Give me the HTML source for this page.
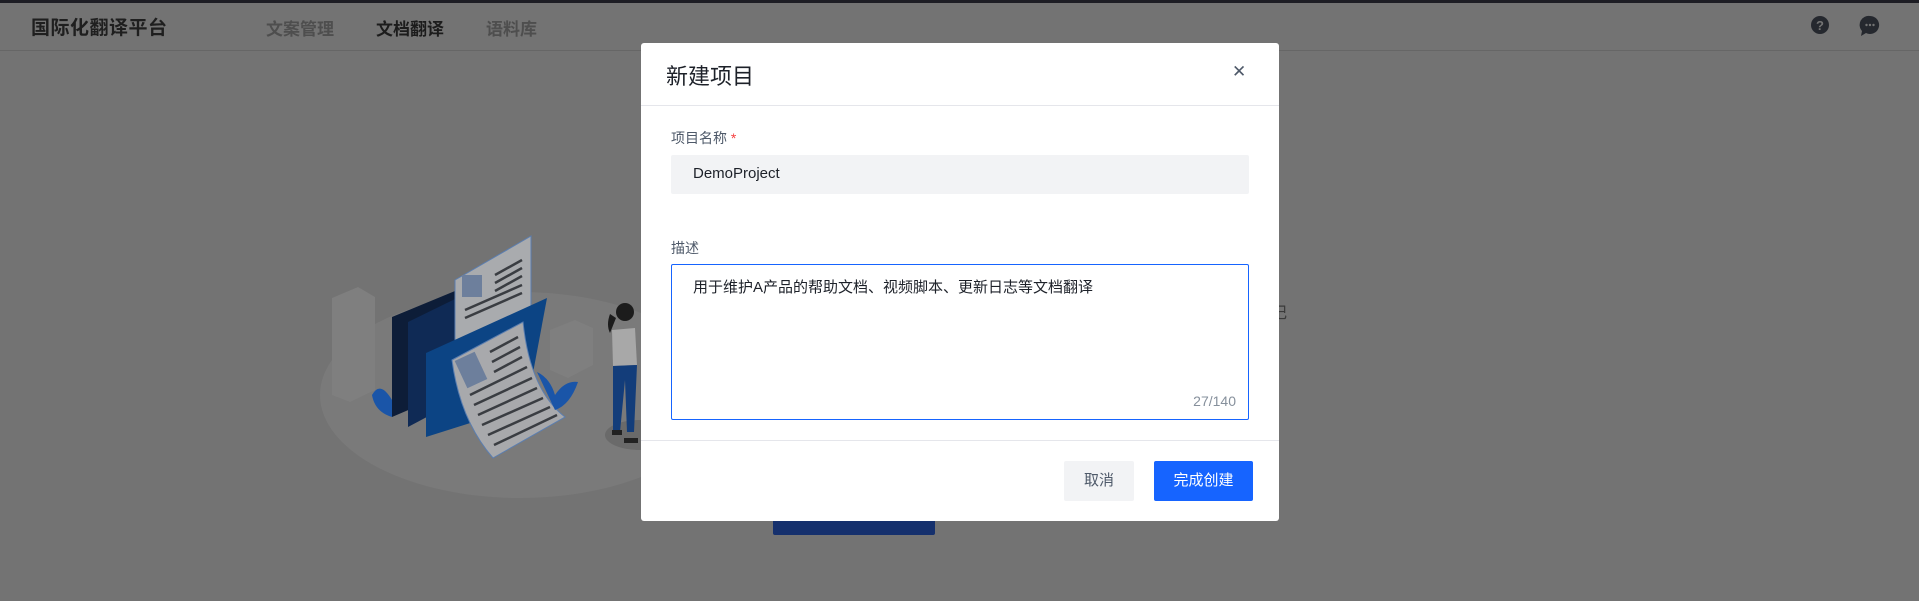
<!DOCTYPE html>
<html><head><meta charset="utf-8"><style>
*{margin:0;padding:0;box-sizing:border-box}
body{width:1919px;height:601px;overflow:hidden;background:#737373;font-family:"Liberation Sans","Noto Sans CJK SC",sans-serif;position:relative}
.abs{position:absolute}
.topbar{left:0;top:0;width:1919px;height:3px;background:#1d1d24}
.hdr{left:0;top:3px;width:1919px;height:48px;border-bottom:1px solid #666}
.logo{left:31px;top:13px;font-size:19px;font-weight:bold;color:#1f1f1f;letter-spacing:0.5px}
.nav{top:15px;font-size:17px;font-weight:bold;color:#4e4e4e}
.modal{left:641px;top:43px;width:638px;height:478px;background:#fff;border-radius:3px}
.mt{left:25px;top:16px;font-size:22px;color:#1d2129}
.close{left:591px;top:19px;font-size:17px;color:#4e5969}
.div{left:0;width:638px;height:1px;background:#e5e6eb}
.lbl{font-size:14px;color:#4e5969}
.inp{left:30px;top:112px;width:578px;height:39px;background:#f2f3f5;border-radius:2px;font-size:15px;color:#1d2129;padding:10px 22px}
.ta{left:30px;top:221px;width:578px;height:156px;border:1px solid #1664ff;border-radius:2px;font-size:15px;color:#1d2129;padding:11px 21px}
.cnt{right:12px;bottom:10px;font-size:14px;color:#86909c}
.btn{top:418px;height:40px;border-radius:2px;font-size:15px;text-align:center;line-height:40px}
</style></head><body>
<div class="abs topbar"></div>
<div class="abs hdr"></div>
<div class="abs logo">国际化翻译平台</div>
<div class="abs nav" style="left:266px">文案管理</div>
<div class="abs nav" style="left:376px;color:#1c1c1c">文档翻译</div>
<div class="abs nav" style="left:486px">语料库</div>
<svg class="abs" style="left:1811px;top:15px" width="70" height="22" viewBox="0 0 70 22">
<circle cx="9" cy="10" r="9" fill="#25282e"/><text x="9" y="15" font-size="13" font-weight="bold" fill="#737373" text-anchor="middle" font-family="Liberation Sans">?</text>
<path d="M59 1a9 9 0 1 1-4 17l-5 3 1-5a9 9 0 0 1 8-15z" fill="#25282e"/><circle cx="55.5" cy="10" r="1.2" fill="#737373"/><circle cx="59" cy="10" r="1.2" fill="#737373"/><circle cx="62.5" cy="10" r="1.2" fill="#737373"/>
</svg>
<svg class="abs" style="left:0;top:0" width="1919" height="601">
<ellipse cx="520" cy="395" rx="200" ry="103" fill="#7a7a7a"/>
<ellipse cx="640" cy="435" rx="35" ry="15" fill="#6a6a6a"/>
<polygon points="332,298 358,287 375,297 375,390 350,402 332,395" fill="#7f7f7f"/>
<polygon points="550,330 575,320 593,328 593,365 568,378 550,370" fill="#7f7f7f"/>
<polygon points="392,317 455,291 455,390 392,417" fill="#0d1d38"/>
<polygon points="408,322 455,299 455,402 408,427" fill="#0f2a55"/>
<polygon points="455,280 531,236 531,320 455,360" fill="#a9abae" stroke="#5b7eb0"/>
<rect x="462" y="275" width="20" height="22" fill="#6d7f9c"/>
<g stroke="#3a3d42" stroke-width="2.5"><line x1="495" y1="275" x2="522" y2="260"/><line x1="495" y1="283" x2="522" y2="268"/><line x1="495" y1="291" x2="522" y2="276"/><line x1="465" y1="310" x2="522" y2="285"/><line x1="465" y1="318" x2="522" y2="293"/></g>
<polygon points="426,353 547,298 527,405 426,437" fill="#0c4484"/>
<path d="M452,360 L523,322 Q530,390 565,417 L493,458 Q460,420 452,360z" fill="#a8a9ac" stroke="#5b7eb0"/>
<rect x="460" y="355" width="22" height="30" fill="#6d7f9c" transform="rotate(-25 471 370)"/>
<g stroke="#3a3d42" stroke-width="2.5"><line x1="490" y1="352" x2="518" y2="337"/><line x1="492" y1="362" x2="520" y2="347"/><line x1="494" y1="372" x2="522" y2="357"/><line x1="470" y1="395" x2="527" y2="367"/><line x1="474" y1="405" x2="532" y2="378"/><line x1="478" y1="415" x2="537" y2="388"/><line x1="482" y1="425" x2="543" y2="398"/><line x1="488" y1="435" x2="550" y2="407"/><line x1="494" y1="445" x2="557" y2="415"/></g>
<path d="M372,395 Q380,380 392,400 L392,417 Q375,412 372,395z" fill="#1a55a8"/>
<path d="M537,372 Q550,378 555,395 Q565,380 578,382 Q570,405 555,410z" fill="#1a55a8"/>
<circle cx="625" cy="312" r="9" fill="#1c1c1c"/>
<path d="M610,314 Q606,325 610,333 L616,318z" fill="#1c1c1c"/>
<path d="M612,330 L635,328 L637,365 L613,366z" fill="#a8a8a8"/>
<path d="M613,366 L637,365 L634,432 L627,432 L625,380 L620,432 L613,432z" fill="#133d7a"/>
<rect x="612" y="430" width="10" height="5" fill="#222"/><rect x="624" y="438" width="14" height="5" fill="#222"/>
<rect x="773" y="502" width="162" height="33" rx="2" fill="#15306d"/>
<text x="1271" y="318" font-size="16" fill="#3a3a3a" font-family="Noto Sans CJK SC">记</text>
</svg>
<div class="abs modal">
<div class="abs mt">新建项目</div>
<div class="abs close">✕</div>
<div class="abs div" style="top:62px"></div>
<div class="abs lbl" style="left:30px;top:85px">项目名称 <span style="color:#f53f3f">*</span></div>
<div class="abs inp">DemoProject</div>
<div class="abs lbl" style="left:30px;top:195px">描述</div>
<div class="abs ta">用于维护A产品的帮助文档、视频脚本、更新日志等文档翻译<div class="abs cnt">27/140</div></div>
<div class="abs div" style="top:397px"></div>
<div class="abs btn" style="left:423px;width:70px;background:#f2f3f5;color:#4e5969">取消</div>
<div class="abs btn" style="left:513px;width:99px;background:#1664ff;color:#fff">完成创建</div>
</div>
</body></html>
